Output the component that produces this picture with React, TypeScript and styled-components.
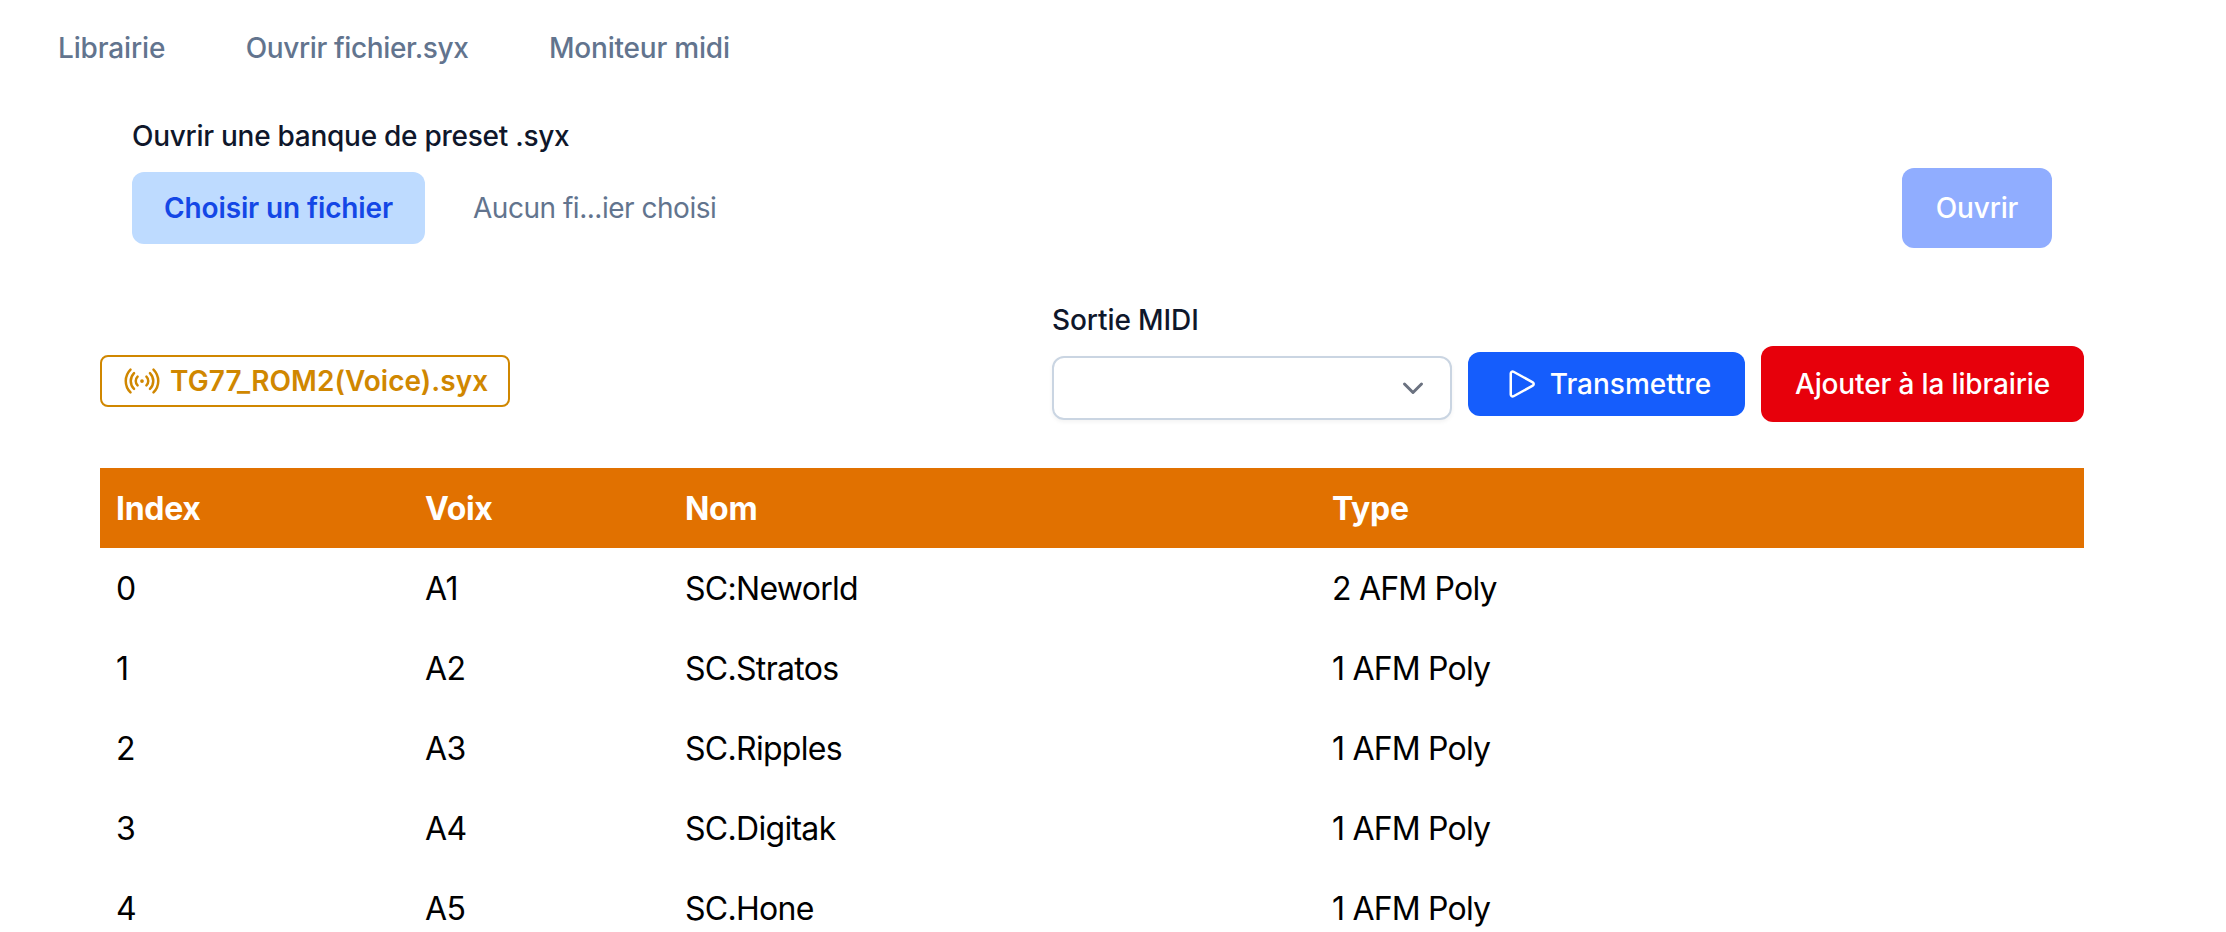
import styled, { createGlobalStyle } from "styled-components"
import { HiOutlinePlay, HiOutlineSignal } from "react-icons/hi2"

type VoiceType = {
    index: number
    voice: string
    name: string
    type: string
}

type SpacingType = {
    $spacing?: number
}

const voices: VoiceType[] = [
    { index: 0, voice: "A1", name: "SC:Neworld", type: "2 AFM Poly" },
    { index: 1, voice: "A2", name: "SC.Stratos", type: "1 AFM Poly" },
    { index: 2, voice: "A3", name: "SC.Ripples", type: "1 AFM Poly" },
    { index: 3, voice: "A4", name: "SC.Digitak", type: "1 AFM Poly" },
    { index: 4, voice: "A5", name: "SC.Hone", type: "1 AFM Poly" },
]

const GlobalStyle = createGlobalStyle`
    * {
        box-sizing: border-box;
    }
    body {
        margin: 0;
        background: #fff;
        color: #000;
        font-family: Inter, "Liberation Sans", sans-serif;
        font-size: 28px;
        line-height: 40px;
        overflow: hidden;
    }
    button {
        font: inherit;
        border: none;
    }
`
const Nav = styled.nav`
    display: flex;
    gap: 80.5px;
    padding: 28px 58px;
`
const NavLink = styled.a<SpacingType>`
    color: #62748e;
    font-weight: 500;
    letter-spacing: ${({ $spacing = 0 }) => $spacing}px;
    white-space: nowrap;
`
const Content = styled.main`
    width: 1984px;
    margin-left: 100px;
`
const OpenForm = styled.form`
    display: flex;
    justify-content: space-between;
    align-items: flex-end;
    padding: 20px 32px 0;
`
const Label = styled.label<SpacingType>`
    display: block;
    color: #0f172b;
    font-weight: 500;
    letter-spacing: ${({ $spacing = 0 }) => $spacing}px;
    white-space: nowrap;
`
const FileField = styled.div`
    display: flex;
    align-items: center;
    gap: 48px;
    margin: 16px 0 4px;
`
const FileName = styled.span`
    color: #62748e;
    letter-spacing: -0.48px;
    white-space: nowrap;
`
const ChooseButton = styled.button`
    width: 293px;
    height: 72px;
    padding: 0;
    border-radius: 12px;
    background: #bedbff;
    color: #1447e6;
    font-weight: 600;
    letter-spacing: -0.12px;
`
const ActionButton = styled.button<SpacingType & { $color: string, $width: number, $height: number }>`
    display: flex;
    align-items: center;
    justify-content: center;
    gap: 8px;
    width: ${({ $width }) => $width}px;
    height: ${({ $height }) => $height}px;
    padding: 0;
    border-radius: 12px;
    background: ${({ $color }) => $color};
    color: #fff;
    font-weight: 500;
    letter-spacing: ${({ $spacing = 0 }) => $spacing}px;
    white-space: nowrap;
`
const Toolbar = styled.div`
    display: flex;
    justify-content: space-between;
    align-items: flex-start;
    height: 220px;
    padding-top: 52px;
`
const FileBadge = styled.div`
    display: flex;
    align-items: center;
    gap: 8px;
    width: 410px;
    height: 52px;
    margin-top: 55px;
    padding-left: 20px;
    border: 2px solid #d08700;
    border-radius: 8px;
    color: #d08700;
    font-weight: 600;
    letter-spacing: 0.04px;
    white-space: nowrap;
`
const Actions = styled.div`
    display: flex;
    gap: 16px;
    align-items: center;
`
const OutputField = styled.div`
    height: 168px;
`
const Select = styled.div`
    display: flex;
    align-items: center;
    justify-content: flex-end;
    width: 400px;
    height: 64px;
    margin-top: 16px;
    padding-right: 17px;
    border: 2px solid #cad5e2;
    border-radius: 12px;
    box-shadow: 0 2px 4px rgba(0, 0, 0, 0.05);
`
const Table = styled.table`
    width: 100%;
    table-layout: fixed;
    border-collapse: collapse;
    font-size: 32px;
    line-height: 48px;
    text-align: left;
`
const HeadRow = styled.tr`
    background: #e17100;
    color: #fff;
`
const HeadCell = styled.th<{ $width?: number }>`
    width: ${({ $width }) => $width ? $width + "px" : "auto"};
    padding: 17px 16px 15px;
    font-weight: 700;
    letter-spacing: -0.3px;
`
const Cell = styled.td<SpacingType>`
    padding: 17px 16px 15px;
    letter-spacing: ${({ $spacing = 0 }) => $spacing}px;
`

const ChevronIcon = () => (
    <svg width="40" height="40" viewBox="0 0 20 20" fill="none" stroke="#6b7280" strokeWidth="1.5" strokeLinecap="round" strokeLinejoin="round">
        <path d="M5.75 8l4.25 4.25 4.25-4.25" />
    </svg>
)

const App = () => {
    return (
        <>
            <GlobalStyle />
            <Nav>
                <NavLink $spacing={-0.15}>Librairie</NavLink>
                <NavLink $spacing={-0.38}>Ouvrir fichier.syx</NavLink>
                <NavLink $spacing={-0.2}>Moniteur midi</NavLink>
            </Nav>
            <Content>
                <OpenForm>
                    <div>
                        <Label $spacing={-0.27}>Ouvrir une banque de preset .syx</Label>
                        <FileField>
                            <ChooseButton type="button">Choisir un fichier</ChooseButton>
                            <FileName>Aucun fi...ier choisi</FileName>
                        </FileField>
                    </div>
                    <ActionButton type="button" $color="#90adff" $width={150} $height={80} $spacing={-0.2}>Ouvrir</ActionButton>
                </OpenForm>
                <Toolbar>
                    <FileBadge>
                        <HiOutlineSignal size={40} />
                        TG77_ROM2(Voice).syx
                    </FileBadge>
                    <Actions>
                        <OutputField>
                            <Label $spacing={-0.1}>Sortie MIDI</Label>
                            <Select>
                                <ChevronIcon />
                            </Select>
                        </OutputField>
                        <ActionButton $color="#155dfc" $width={277} $height={64}>
                            <HiOutlinePlay size={40} />
                            Transmettre
                        </ActionButton>
                        <ActionButton $color="#e7000b" $width={323} $height={76} $spacing={-0.14}>Ajouter à la librairie</ActionButton>
                    </Actions>
                </Toolbar>
                <Table>
                    <thead>
                        <HeadRow>
                            <HeadCell $width={309}>Index</HeadCell>
                            <HeadCell $width={260}>Voix</HeadCell>
                            <HeadCell $width={647}>Nom</HeadCell>
                            <HeadCell>Type</HeadCell>
                        </HeadRow>
                    </thead>
                    <tbody>
                        {voices.map(v => (
                            <tr key={v.index}>
                                <Cell>{v.index}</Cell>
                                <Cell $spacing={-0.6}>{v.voice}</Cell>
                                <Cell $spacing={-0.7}>{v.name}</Cell>
                                <Cell $spacing={-0.8}>{v.type}</Cell>
                            </tr>
                        ))}
                    </tbody>
                </Table>
            </Content>
        </>
    )
}

export default App
